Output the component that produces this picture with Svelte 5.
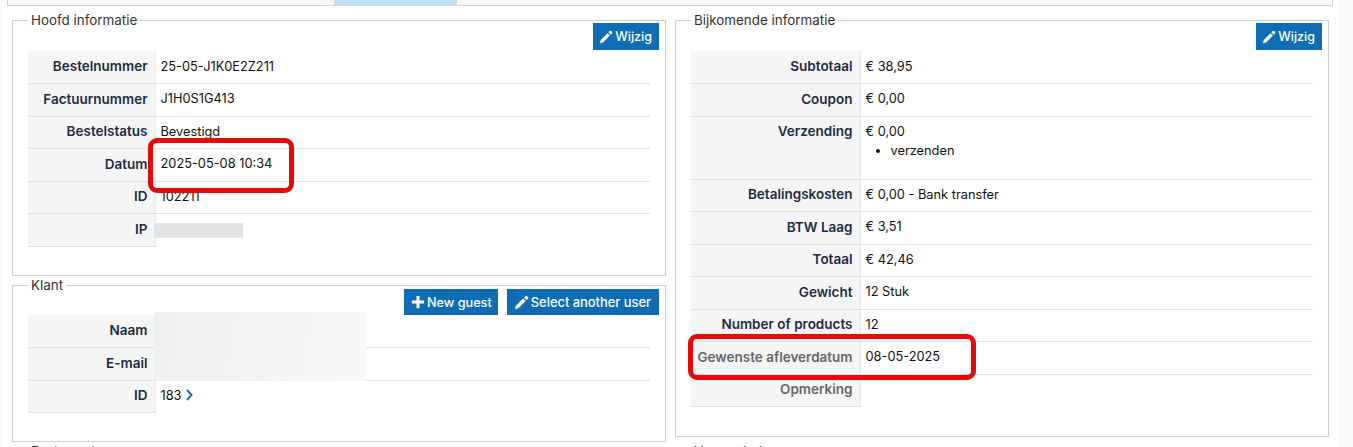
<script>
  const mainRows = [
    ['Bestelnummer', '25-05-J1K0E2Z211'],
    ['Factuurnummer', 'J1H0S1G413'],
    ['Bestelstatus', 'Bevestigd'],
    ['Datum', '2025-05-08 10:34'],
    ['ID', '102211'],
    ['IP', '']
  ];
  const extraRows = [
    ['Subtotaal', '€ 38,95'],
    ['Coupon', '€ 0,00'],
    ['Verzending', '€ 0,00', 'verzenden'],
    ['Betalingskosten', '€ 0,00 - Bank transfer'],
    ['BTW Laag', '€ 3,51'],
    ['Totaal', '€ 42,46'],
    ['Gewicht', '12 Stuk'],
    ['Number of products', '12'],
    ['Gewenste afleverdatum', '08-05-2025', null, true],
    ['Opmerking', '', null, true]
  ];
</script>

{#snippet pencil()}
  <svg class="ico" viewBox="0 0 16 16" aria-hidden="true"><path d="M12.2 1.2a1.2 1.2 0 0 1 1.7 0l1 1a1.2 1.2 0 0 1 0 1.7l-1.5 1.5-2.7-2.7zM9.8 3.6l2.7 2.7-7.9 7.9-3.6 1 1-3.7z"/></svg>
{/snippet}

<div class="page">
  <div class="sheet">
    <div class="tabs"><div class="tab"></div></div>
    <div class="cols">
      <div class="col">
        <fieldset class="main">
          <legend>Hoofd informatie</legend>
          <div class="actions"><button>{@render pencil()}Wijzig</button></div>
          <table>
            <colgroup><col class="c1" /></colgroup>
            <tbody>
              {#each mainRows as r}
                <tr><th>{r[0]}</th><td>{r[1]}</td></tr>
              {/each}
            </tbody>
          </table>
          <div class="mask ip"></div>
        </fieldset>
        <fieldset class="klant">
          <legend>Klant</legend>
          <div class="actions">
            <button class="guest"><svg class="ico" viewBox="0 0 16 16" aria-hidden="true"><path d="M6.3 1h3.4v5.3H15v3.4H9.7V15H6.3V9.7H1V6.3h5.3z"/></svg>New guest</button>
            <button class="other">{@render pencil()}Select another user</button>
          </div>
          <table>
            <colgroup><col class="c1" /></colgroup>
            <tbody>
              <tr><th>Naam</th><td></td></tr>
              <tr><th>E-mail</th><td></td></tr>
              <tr><th>ID</th><td>183 <svg class="chev" viewBox="0 0 8 12" aria-hidden="true"><path d="M2 1l4.5 5L2 11"/></svg></td></tr>
            </tbody>
          </table>
          <div class="mask who"></div>
        </fieldset>
        <fieldset class="next left"><legend>Factuuradres</legend></fieldset>
      </div>
      <div class="col">
        <fieldset class="extra">
          <legend>Bijkomende informatie</legend>
          <div class="actions"><button>{@render pencil()}Wijzig</button></div>
          <table>
            <colgroup><col class="c2" /></colgroup>
            <tbody>
              {#each extraRows as r}
                <tr class:muted={r[3]} class:tall={r[2]}>
                  <th>{r[0]}</th>
                  <td>{r[1]}{#if r[2]}<ul><li>{r[2]}</li></ul>{/if}</td>
                </tr>
              {/each}
            </tbody>
          </table>
        </fieldset>
        <fieldset class="next right"><legend>Verzendadres</legend></fieldset>
      </div>
    </div>
  </div>
  <div class="mark a"></div>
  <div class="mark b"></div>
</div>

<style>
  :global(body) { margin: 0; background: #f9fafc; }
  .page {
    position: relative;
    height: 447px;
    overflow: hidden;
    font-family: "Inter", "Noto Sans", sans-serif;
    font-size: 12.8px;
    color: #111;
    background: #f9fafc;
  }
  .sheet {
    margin-left: 2px;
    width: 1336px;
    height: 447px;
    background: #fff;
  }
  .tabs {
    margin: 0 5px;
    height: 5px;
    background: #f8f8f8;
    border: 1px solid #d5d5d5;
    border-top: 0;
    padding-left: 326px;
  }
  .tab { width: 123px; height: 5px; background: #bfdff3; }
  .cols {
    display: grid;
    grid-template-columns: 654px 654px;
    column-gap: 9px;
    padding: 7px 0 0 10px;
  }
  fieldset {
    position: relative;
    margin: 0;
    padding: 0 15px;
    border: 1px solid #cfcfcf;
    min-width: 0;
    box-sizing: border-box;
  }
  legend {
    padding: 0 3px;
    margin-left: 0;
    font-size: 13.4px;
    line-height: 14px;
    color: #333;
  }
  .main { height: 263px; }
  .klant { height: 164px; margin-top: 2px; }
  .extra { height: 424px; }
  .next { height: 60px; }
  .next.left { margin-top: 2px; }
  .next.right { margin-top: 7px; }
  .actions {
    display: flex;
    justify-content: flex-end;
    gap: 9px;
    margin: -4px -9px 0 0;
    height: 27px;
  }
  .klant .actions { height: 26px; margin-top: -3px; }
  button {
    display: flex;
    align-items: center;
    gap: 2px;
    height: 27px;
    padding: 0 7px 0 6px;
    border: 0;
    background: #0e6db5;
    color: #fff;
    font: 500 12.5px "Inter", sans-serif;
  }
  .klant button { height: 26px; }
  .guest { padding: 0 6px 0 7px; font-size: 12.7px; }
  .other { padding: 0 7px; font-size: 13px; }
  .klant .other { padding-right: 8px; font-size: 12.9px; }
  .klant .guest { padding-right: 6px; font-size: 12.7px; }
  .ico { width: 14px; height: 14px; fill: #fff; flex: none; }
  .other .ico { width: 15px; height: 15px; }
  table {
    width: 622px;
    border-collapse: collapse;
    margin-top: 1px;
    table-layout: fixed;
  }
  .klant table { margin-top: 0; }
  .c1 { width: 127px; }
  .c2 { width: 169px; }
  tr { height: 32.5px; }
  th, td {
    padding: 0 6px 2px 5px;
    border-bottom: 1px solid #e0e0e4;
    vertical-align: middle;
  }
  th {
    text-align: right;
    padding-right: 7px;
    font-size: 13.5px;
    font-weight: 600;
    background: #f5f5f5;
    color: #1c2c46;
    border-right: 1px solid #e8e8e8;
  }
  tr:last-child td { border-bottom: 0; }
  .muted th { color: #666; }
  .tall { height: 63px; }
  .tall td { vertical-align: top; padding-top: 7px; }
  .tall th { vertical-align: top; padding-top: 6px; }
  ul { margin: 4px 0 0; padding-left: 25px; }
  .chev { width: 8px; height: 12px; fill: none; stroke: #1f6fb5; stroke-width: 2; vertical-align: -1px; }
  .mask { position: absolute; }
  .ip { left: 141px; top: 196px; width: 89px; height: 15px; background: #e3e4e5; }
  .who { left: 141px; top: 20px; width: 212px; height: 69px; background: linear-gradient(100deg, #eeefef, #f8f8f8); }
  .mark {
    position: absolute;
    box-sizing: border-box;
    border: 5px solid #e90808;
    border-radius: 9px;
  }
  .a { left: 148px; top: 138px; width: 146px; height: 55px; }
  .b { left: 688px; top: 334px; width: 288px; height: 46px; }
</style>
